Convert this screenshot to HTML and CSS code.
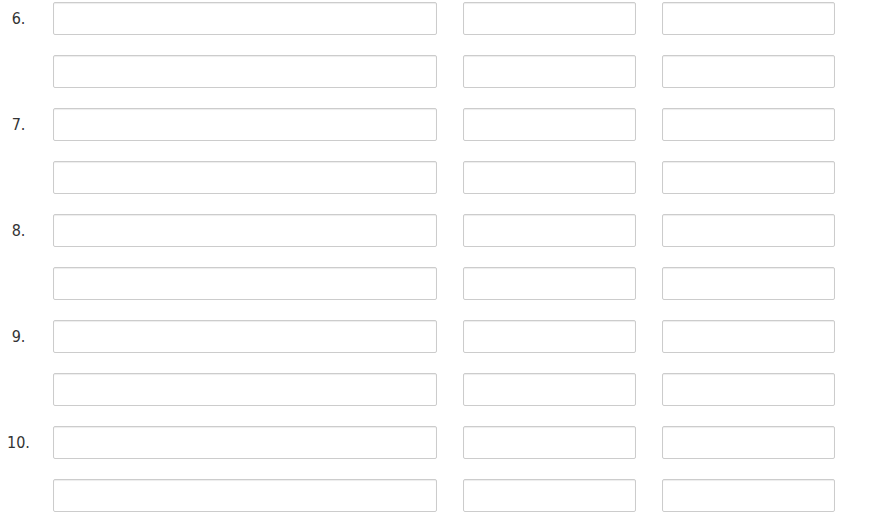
FILE: index.html
```html
<!DOCTYPE html>
<html lang="en">

<head>
    <meta charset="UTF-8">
    <title>Entries</title>
    <link rel="stylesheet" href="styles.css">
</head>

<body>
    <div class="list">
        <div class="item">
            <div class="num">6.</div>
            <div class="fields">
                <input type="text"><input type="text"><input type="text">
                <input type="text"><input type="text"><input type="text">
            </div>
        </div>
        <div class="item">
            <div class="num">7.</div>
            <div class="fields">
                <input type="text"><input type="text"><input type="text">
                <input type="text"><input type="text"><input type="text">
            </div>
        </div>
        <div class="item">
            <div class="num">8.</div>
            <div class="fields">
                <input type="text"><input type="text"><input type="text">
                <input type="text"><input type="text"><input type="text">
            </div>
        </div>
        <div class="item">
            <div class="num">9.</div>
            <div class="fields">
                <input type="text"><input type="text"><input type="text">
                <input type="text"><input type="text"><input type="text">
            </div>
        </div>
        <div class="item">
            <div class="num">10.</div>
            <div class="fields">
                <input type="text"><input type="text"><input type="text">
                <input type="text"><input type="text"><input type="text">
            </div>
        </div>
    </div>
</body>

</html>
```

FILE: styles.css
```css
body {
    margin: 0;
    background-color: #fff;
    font-family: "DejaVu Sans Condensed", "DejaVu Sans", sans-serif;
    color: #333;
}

.list {
    display: flex;
    flex-direction: column;
    gap: 20px;
    padding-top: 2px;
}

.item {
    display: flex;
}

.num {
    width: 37px;
    margin-right: 16px;
    text-align: center;
    font-size: 16px;
    line-height: 33px;
}

.fields {
    display: grid;
    grid-template-columns: 384px 173px 173px;
    column-gap: 26px;
    row-gap: 20px;
}

.fields input {
    height: 33px;
    margin: 0;
    padding: 6px 10px;
    box-sizing: border-box;
    border: 1px solid #ccc;
    border-radius: 2px;
    box-shadow: inset 0 1px 1px rgba(0, 0, 0, 0.075);
    background-color: #fff;
}
```
